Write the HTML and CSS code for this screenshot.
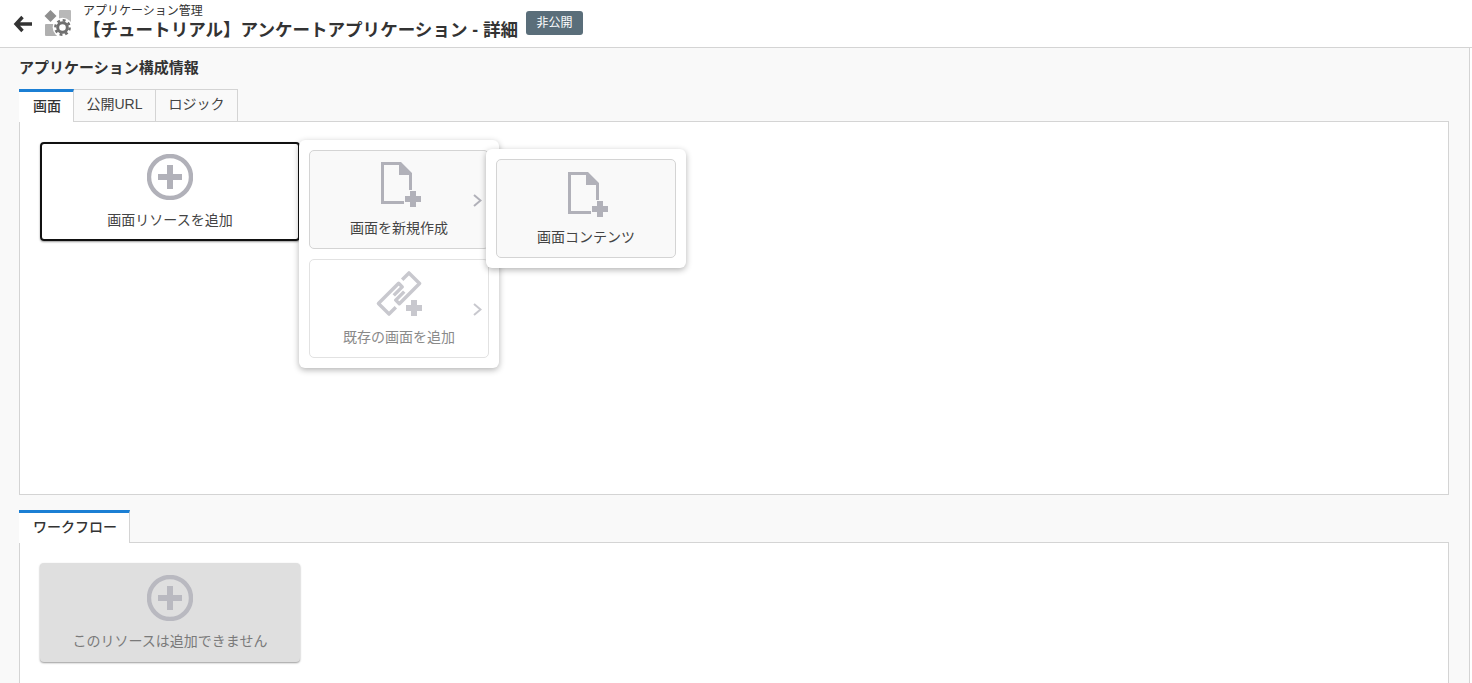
FILE: index.html
```html
<!DOCTYPE html>
<html lang="ja">
<head>
<meta charset="utf-8">
<title>アプリケーション管理</title>
<link rel="stylesheet" href="styles.css">
</head>
<body>
<svg class="defs" width="0" height="0" aria-hidden="true">
  <defs>
    <symbol id="i-add" viewBox="0 0 46 46">
      <circle cx="23" cy="23" r="21" fill="none" stroke="currentColor" stroke-width="4.4"/>
      <path d="M20 11h6v9h9v6h-9v9h-6v-9h-9v-6h9z" fill="currentColor"/>
    </symbol>
    <symbol id="i-doc" viewBox="0 0 42 46">
      <path d="M0 0H20L31 11V28H28V13H18V3H3V39H23V42H0Z" fill="currentColor"/>
      <path d="M29 29h6v5h5v6h-5v5h-6v-5h-5v-6h5z" fill="currentColor"/>
    </symbol>
    <symbol id="i-link" viewBox="0 0 47 46">
      <g transform="translate(23 22.500) rotate(-45)" fill="none" stroke="currentColor" stroke-width="3.400" stroke-linejoin="round">
        <path d="M-12 7.500H-21.600V-7.500H7V-2.400H-5"/>
        <path d="M12 -7.500H21.600V7.500H-7V2.400H5"/>
      </g>
      <path d="M35 29h6v5h5v6h-5v5h-6v-5h-5v-6h5z" fill="currentColor"/>
    </symbol>
    <symbol id="i-chev" viewBox="0 0 9 13">
      <path d="M1 1l6.500 5.500L1 12" fill="none" stroke="currentColor" stroke-width="2"/>
    </symbol>
  </defs>
</svg>

<header class="topbar">
  <svg class="back" viewBox="0 0 20 18" width="20" height="18">
    <path d="M9.500 2 3 9l6.500 7M3.500 9H19" fill="none" stroke="#333" stroke-width="3.400"/>
  </svg>
  <svg class="app-icon" viewBox="0 0 28 28" width="28" height="28">
    <path d="M6.500 0 12.500 6 6.500 12 .5 6z" fill="#8f8f8f"/>
    <rect x="15" y="0" width="12" height="12" rx="1" fill="#b8b8b8"/>
    <rect x="1" y="14" width="12" height="12" rx="1" fill="#b0b0b0"/>
    <circle cx="18.500" cy="17.500" r="9.800" fill="#fff"/>
    <circle cx="18.500" cy="17.500" r="4.800" fill="none" stroke="#707070" stroke-width="3"/>
    <circle cx="18.500" cy="17.500" r="7.200" fill="none" stroke="#707070" stroke-width="2.400" stroke-dasharray="2.900 2.750"/>
  </svg>
  <div class="titles">
    <div class="crumb">アプリケーション管理</div>
    <h1 class="title">【チュートリアル】アンケートアプリケーション - 詳細</h1>
  </div>
  <span class="badge">非公開</span>
</header>

<main class="content">
  <h2 class="section-title">アプリケーション構成情報</h2>

  <nav class="tabs">
    <a class="tab active">画面</a>
    <a class="tab">公開URL</a>
    <a class="tab">ロジック</a>
  </nav>
  <section class="panel panel-screen">
    <button class="tile tile-focus">
      <svg class="ico-add"><use href="#i-add"/></svg>
      <span>画面リソースを追加</span>
    </button>

    <div class="popup popup-one">
      <div class="option filled">
        <svg class="ico-doc"><use href="#i-doc"/></svg>
        <span>画面を新規作成</span>
        <svg class="chev"><use href="#i-chev"/></svg>
      </div>
      <div class="option muted">
        <svg class="ico-link"><use href="#i-link"/></svg>
        <span>既存の画面を追加</span>
        <svg class="chev"><use href="#i-chev"/></svg>
      </div>
    </div>

    <div class="popup popup-two">
      <div class="option filled">
        <svg class="ico-doc"><use href="#i-doc"/></svg>
        <span>画面コンテンツ</span>
      </div>
    </div>
  </section>

  <nav class="tabs tabs-flow">
    <a class="tab active">ワークフロー</a>
  </nav>
  <section class="panel panel-flow">
    <button class="tile tile-disabled" disabled>
      <svg class="ico-add"><use href="#i-add"/></svg>
      <span>このリソースは追加できません</span>
    </button>
  </section>
</main>
</body>
</html>
```
FILE: styles.css
```css
* { box-sizing: border-box; }
html, body { margin: 0; height: 683px; overflow: hidden; background: #fff; }
body {
  font-family: "Liberation Sans", "Noto Sans CJK JP", sans-serif;
  color: #333;
  font-size: 14px;
  display: flex;
  flex-direction: column;
}
.defs { position: absolute; }

.topbar {
  height: 48px;
  flex: none;
  display: flex;
  align-items: flex-start;
  padding-left: 13px;
  border-bottom: 1px solid #d4d4d4;
  background: #fff;
}
.back { margin-top: 15px; flex: none; }
.app-icon { margin: 10px 0 0 11px; flex: none; }
.titles { margin-left: 11px; width: 439px; flex: none; }
.crumb { font-size: 12px; line-height: 14px; margin-top: 4px; white-space: nowrap; }
.title {
  margin: 0;
  font-size: 17.55px;
  line-height: 24px;
  font-weight: 700;
  white-space: nowrap;
}
.badge {
  margin: 11px 0 0 4px;
  height: 24px;
  width: 57px;
  text-align: center;
  line-height: 24px;
  font-size: 12px;
  color: #fff;
  background: #5a6e7a;
  border-radius: 3px;
}

.content {
  flex: 1;
  min-height: 0;
  overflow: hidden;
  width: 1470px;
  padding: 0 20px 0 19px;
  background: #f9f9f9;
  border-right: 1px solid #d4d4d4;
}
.section-title {
  margin: 0;
  padding-top: 10px;
  height: 41px;
  font-size: 15px;
  line-height: 20px;
  font-weight: 700;
}

.tabs { display: flex; height: 33px; position: relative; z-index: 1; }
.tabs-flow { margin-top: 15px; }
.tab {
  height: 33px;
  padding: 0 12.5px;
  line-height: 29px;
  font-size: 14px;
  border: 1px solid #d4d4d4;
  border-left: 0;
  color: #444;
  background: #f9f9f9;
  white-space: nowrap;
}
.tab.active {
  padding: 0 12px 0 14px;
  line-height: 28px;
  border: 0;
  border-top: 3px solid #1b7fd4;
  border-right: 1px solid #d4d4d4;
  background: #fff;
  font-weight: 500;
  color: #333;
}

.panel {
  position: relative;
  margin-top: -1px;
  background: #fff;
  border: 1px solid #d4d4d4;
  padding: 20px;
}
.panel-screen { height: 374px; }
.panel-flow { height: 300px; }

.tile {
  width: 260px;
  height: 99px;
  padding: 12px 0 0;
  margin: 0;
  display: flex;
  flex-direction: column;
  align-items: center;
  font: inherit;
  border: 0;
  border-radius: 4px;
  color: #444;
  background: #fff;
  box-shadow: 0 1px 2px rgba(0, 0, 0, .4);
}
.tile span { margin-top: 10px; line-height: 20px; }
.ico-add { width: 46px; height: 46px; color: #b1b1b9; flex: none; }
.tile-focus { outline: 2px solid #111; outline-offset: -2px; }
.tile-disabled { background: #dfdfdf; color: #7a7a7a; }
.tile-disabled .ico-add { color: #b9b9c0; }

.popup {
  position: absolute;
  display: flex;
  flex-direction: column;
  gap: 10px;
  width: 200px;
  padding: 10px;
  background: #fff;
  border-radius: 6px;
  box-shadow: 0 2px 6px rgba(0, 0, 0, .3);
}
.popup-one { left: 279px; top: 18px; height: 228px; }
.popup-two { left: 466px; top: 27px; height: 119px; }

.option {
  position: relative;
  height: 99px;
  flex: none;
  display: flex;
  flex-direction: column;
  align-items: center;
  padding-top: 11px;
  border: 1px solid #d4d4d4;
  border-radius: 5px;
  color: #444;
  font-size: 14px;
}
.option span { margin-top: 10px; line-height: 20px; }
.popup-two .option { padding-top: 12px; }
.popup-two .option span { margin-top: 9px; }
.option.filled { background: #f9f9f9; }
.option.muted { border-color: #e2e2e2; color: #8a8a8a; }
.option.muted svg { color: #c8c8ce; }
.ico-doc { width: 42px; height: 46px; margin-left: 6px; color: #b1b1b9; flex: none; }
.ico-link { width: 47px; height: 46px; flex: none; }
.chev { position: absolute; right: 6px; top: 43px; width: 9px; height: 13px; color: #b1b1b9; }
```
